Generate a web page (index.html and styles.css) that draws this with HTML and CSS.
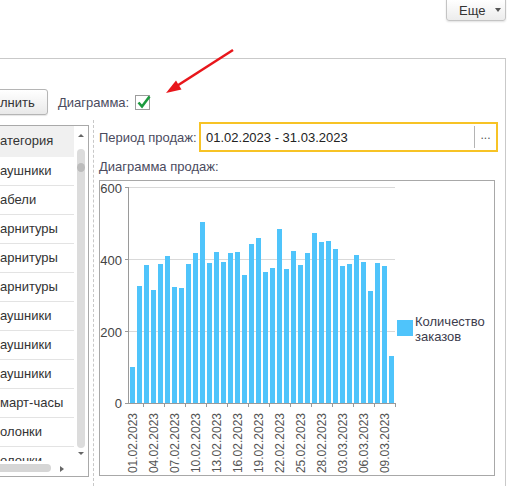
FILE: index.html
```html
<!DOCTYPE html>
<html>
<head>
  <meta charset="utf-8">
  <title>Продажи по категориям</title>
  <link rel="stylesheet" href="styles.css">
</head>
<body>
  <div class="top">
    <button class="more">Еще <span class="caret"></span></button>
  </div>

  <div class="group">
    <div class="toolbar">
      <button class="fill">лнить</button>
      <span class="chk-label">Диаграмма:</span>
      <span class="checkbox">
        <svg width="16" height="16" viewBox="0 0 16 16"><path d="M3.5 7.5 L7 11.5 L14.5 1.5" fill="none" stroke="#1c9a3e" stroke-width="2.6"/></svg>
      </span>
    </div>

    <div class="main">
      <div class="list">
        <div class="rows">
          <div class="row head">атегория</div>
          <div class="row">аушники</div>
          <div class="row">абели</div>
          <div class="row">арнитуры</div>
          <div class="row">арнитуры</div>
          <div class="row">арнитуры</div>
          <div class="row">аушники</div>
          <div class="row">аушники</div>
          <div class="row">аушники</div>
          <div class="row">март-часы</div>
          <div class="row">олонки</div>
          <div class="row">олонки</div>
        </div>
        <div class="vscroll">
          <span class="arr-up"></span>
          <div class="track"><div class="thumb"></div></div>
          <span class="arr-down"></span>
        </div>
        <div class="hscroll">
          <div class="hbar"></div>
          <span class="arr-right"></span>
        </div>
        <div class="corner"></div>
      </div>

      <div class="splitter"></div>

      <div class="panel">
        <div class="period">
          <span class="period-label">Период продаж:</span>
          <div class="field">
            <span class="field-value">01.02.2023 - 31.03.2023</span>
            <span class="field-btn">...</span>
          </div>
        </div>
        <div class="chart-title">Диаграмма продаж:</div>
        <div class="chart">
          <svg width="394" height="294" viewBox="0 0 394 294">
            <g stroke="#d9d9d9">
              <line x1="28" y1="6.5" x2="295" y2="6.5"/>
              <line x1="28" y1="78.5" x2="295" y2="78.5"/>
              <line x1="28" y1="150.5" x2="295" y2="150.5"/>
            </g>
            <g fill="#4fc4fb">
              <rect x="30" y="186" width="5" height="36"/>
              <rect x="37" y="105" width="5" height="117"/>
              <rect x="44" y="84" width="5" height="138"/>
              <rect x="51" y="109" width="5" height="113"/>
              <rect x="58" y="83" width="5" height="139"/>
              <rect x="65" y="75" width="5" height="147"/>
              <rect x="72" y="106" width="5" height="116"/>
              <rect x="79" y="107" width="5" height="115"/>
              <rect x="86" y="83" width="5" height="139"/>
              <rect x="93" y="72" width="5" height="150"/>
              <rect x="100" y="41" width="5" height="181"/>
              <rect x="107" y="82" width="5" height="140"/>
              <rect x="114" y="71" width="5" height="151"/>
              <rect x="121" y="81" width="5" height="141"/>
              <rect x="128" y="72" width="5" height="150"/>
              <rect x="135" y="71" width="5" height="151"/>
              <rect x="142" y="94" width="5" height="128"/>
              <rect x="149" y="63" width="5" height="159"/>
              <rect x="156" y="57" width="5" height="165"/>
              <rect x="163" y="91" width="5" height="131"/>
              <rect x="170" y="87" width="5" height="135"/>
              <rect x="177" y="48" width="5" height="174"/>
              <rect x="184" y="88" width="5" height="134"/>
              <rect x="191" y="70" width="5" height="152"/>
              <rect x="198" y="84" width="5" height="138"/>
              <rect x="205" y="72" width="5" height="150"/>
              <rect x="212" y="52" width="5" height="170"/>
              <rect x="219" y="61" width="5" height="161"/>
              <rect x="226" y="60" width="5" height="162"/>
              <rect x="233" y="68" width="5" height="154"/>
              <rect x="240" y="85" width="5" height="137"/>
              <rect x="247" y="83" width="5" height="139"/>
              <rect x="254" y="74" width="5" height="148"/>
              <rect x="261" y="81" width="5" height="141"/>
              <rect x="268" y="110" width="5" height="112"/>
              <rect x="275" y="82" width="5" height="140"/>
              <rect x="282" y="85" width="5" height="137"/>
              <rect x="289" y="175" width="5" height="47"/>
            </g>
            <g stroke="#9a9a9a">
              <line x1="28.5" y1="6" x2="28.5" y2="223"/>
              <line x1="28" y1="222.5" x2="296" y2="222.5"/>
              <line x1="25" y1="6.5" x2="28" y2="6.5"/>
              <line x1="25" y1="78.5" x2="28" y2="78.5"/>
              <line x1="25" y1="150.5" x2="28" y2="150.5"/>
              <line x1="25" y1="222.5" x2="28" y2="222.5"/>
              <line x1="43.5" y1="222" x2="43.5" y2="226"/>
              <line x1="64.5" y1="222" x2="64.5" y2="226"/>
              <line x1="85.5" y1="222" x2="85.5" y2="226"/>
              <line x1="106.5" y1="222" x2="106.5" y2="226"/>
              <line x1="127.5" y1="222" x2="127.5" y2="226"/>
              <line x1="148.5" y1="222" x2="148.5" y2="226"/>
              <line x1="169.5" y1="222" x2="169.5" y2="226"/>
              <line x1="190.5" y1="222" x2="190.5" y2="226"/>
              <line x1="211.5" y1="222" x2="211.5" y2="226"/>
              <line x1="232.5" y1="222" x2="232.5" y2="226"/>
              <line x1="253.5" y1="222" x2="253.5" y2="226"/>
              <line x1="274.5" y1="222" x2="274.5" y2="226"/>
              <line x1="295.5" y1="222" x2="295.5" y2="226"/>
            </g>
            <g class="y-labels" text-anchor="end">
              <text x="22" y="11.5">600</text>
              <text x="22" y="83.5">400</text>
              <text x="22" y="155.5">200</text>
              <text x="22" y="227">0</text>
            </g>
            <g class="x-labels" text-anchor="end">
              <text transform="translate(37 232) rotate(-90)">01.02.2023</text>
              <text transform="translate(58 232) rotate(-90)">04.02.2023</text>
              <text transform="translate(79 232) rotate(-90)">07.02.2023</text>
              <text transform="translate(100 232) rotate(-90)">10.02.2023</text>
              <text transform="translate(121 232) rotate(-90)">13.02.2023</text>
              <text transform="translate(142 232) rotate(-90)">16.02.2023</text>
              <text transform="translate(163 232) rotate(-90)">19.02.2023</text>
              <text transform="translate(184 232) rotate(-90)">22.02.2023</text>
              <text transform="translate(205 232) rotate(-90)">25.02.2023</text>
              <text transform="translate(226 232) rotate(-90)">28.02.2023</text>
              <text transform="translate(247 232) rotate(-90)">03.03.2023</text>
              <text transform="translate(268 232) rotate(-90)">06.03.2023</text>
              <text transform="translate(289 232) rotate(-90)">09.03.2023</text>
            </g>
            <rect x="297" y="139" width="16" height="16" fill="#4fc4fb"/>
            <g class="legend">
              <text x="315" y="145">Количество</text>
              <text x="315" y="160">заказов</text>
            </g>
          </svg>
        </div>
      </div>
    </div>
  </div>

  <svg class="pointer" width="80" height="56" viewBox="0 0 80 56">
    <line x1="73" y1="6" x2="16" y2="42.5" stroke="#e8161b" stroke-width="2.6"/>
    <polygon points="6,49 21.5,45.5 16,36.5" fill="#e8161b"/>
  </svg>
</body>
</html>
```

FILE: styles.css
```css
* { box-sizing: border-box; }
body { margin: 0; width: 507px; height: 486px; overflow: hidden; position: relative; background: #fff; font: 13px "Liberation Sans", Arial, sans-serif; color: #333; }
button { font: inherit; color: #333; cursor: pointer; }

.top { height: 58px; display: flex; justify-content: flex-end; align-items: flex-start; }
.more { margin: -1px 1px 0 0; width: 60px; height: 22px; padding: 0 0 0 12px; display: flex; align-items: center; border: 1px solid #c4c4c4; border-radius: 0 0 3px 3px; background: linear-gradient(#fff, #ececec); box-shadow: 0 1px 2px rgba(0,0,0,0.12); }
.caret { margin-left: 10px; border-left: 3px solid transparent; border-right: 3px solid transparent; border-top: 4px solid #555; }

.group { height: 428px; margin-right: 1px; border-top: 1px solid #c9c9c9; border-right: 1px solid #c9c9c9; }
.toolbar { display: flex; align-items: center; padding-top: 30px; }
.fill { margin-left: -4px; width: 52px; height: 26px; padding: 0 0 0 3px; text-align: left; border: 1px solid #b5b5b5; border-radius: 3px; background: linear-gradient(#fff, #e9e9e9); box-shadow: 0 1px 1px rgba(0,0,0,0.1); }
.chk-label { margin-left: 10px; color: #4b4b5e; }
.checkbox { margin-left: 6px; width: 15px; height: 15px; border: 1px solid #9c9c9c; background: #fff; }
.checkbox svg { display: block; margin: -1px 0 0 -1px; overflow: visible; }

.main { display: flex; height: 366px; margin-top: 5px; }

.list { margin-top: 5px; width: 89px; height: 352px; border: 1px solid #a9a9a9; border-left: 0; display: grid; grid-template-columns: 74px 14px; grid-template-rows: 335px 15px; }
.rows { overflow: hidden; }
.row { height: 29px; line-height: 28px; border-bottom: 1px solid #e3e3e3; white-space: nowrap; }
.row.head { height: 31px; line-height: 30px; background: #f0f0f0; border-bottom: 0; }
.vscroll { display: flex; flex-direction: column; align-items: center; padding-top: 8px; }
.arr-up { border-left: 3px solid transparent; border-right: 3px solid transparent; border-bottom: 3px solid #666; }
.arr-down { margin-top: 4px; border-left: 3px solid transparent; border-right: 3px solid transparent; border-top: 3px solid #666; }
.track { margin-top: 12px; width: 8px; height: 299px; padding-top: 14px; border-radius: 4px; background: #dcdcdc; }
.thumb { width: 8px; height: 9px; border-radius: 50%; background: #bcbcbc; }
.hscroll { display: flex; align-items: center; }
.hbar { width: 51px; height: 8px; margin-top: -1px; border-radius: 0 4px 4px 0; background: #d6d6d6; }
.arr-right { margin-left: 9px; border-top: 3px solid transparent; border-bottom: 3px solid transparent; border-left: 4px solid #666; }

.splitter { margin-left: 4px; border-left: 1px dashed #c8c8c8; }

.panel { margin-left: 5px; width: 399px; }
.period { display: flex; align-items: center; margin-top: 2px; }
.period-label { width: 100px; color: #4b4b5e; }
.field { flex: 1; height: 30px; display: flex; align-items: center; padding-left: 5px; border: 2px solid #f7c325; }
.field-value { flex: 1; color: #222; }
.field-btn { width: 22px; height: 22px; line-height: 18px; text-align: center; border-left: 1px solid #b4b4b4; color: #555; font-size: 12px; }
.chart-title { margin: 7px 0 6px; line-height: 15px; color: #4b4b5e; }
.chart { width: 396px; height: 296px; border: 1px solid #a8a8a8; }
.chart svg { display: block; }
.y-labels { font-size: 13px; fill: #444; }
.x-labels { font-size: 12px; fill: #555; }
.legend { font-size: 13px; fill: #3c3c4c; }

.pointer { position: absolute; left: 160px; top: 44px; }
```
